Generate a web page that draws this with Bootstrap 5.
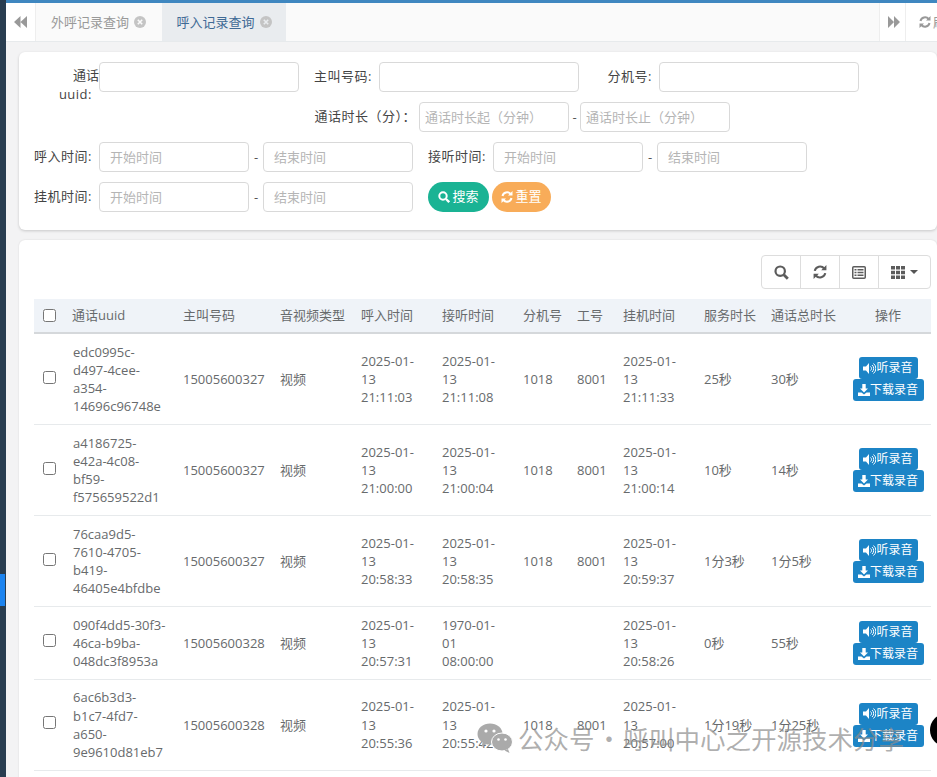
<!DOCTYPE html>
<html lang="zh">
<head>
<meta charset="utf-8">
<title>呼入记录查询</title>
<link rel="stylesheet" href="https://cdn.jsdelivr.net/npm/bootstrap@5.3.0/dist/css/bootstrap.min.css">
<style>
html,body{height:100%;overflow:hidden}
body{font-family:"Open Sans","Noto Sans CJK SC",sans-serif;font-size:13px;color:#676a6c;background:#f3f3f4;line-height:18.2px}
.shell{height:777px;overflow:hidden;position:relative}
.rail{width:6px;background:#293d50;flex:none;position:relative}
.rail-mark{position:absolute;left:0;top:574px;width:5px;height:32px;background:#1c84f0}
.main-area{flex:1;min-width:0;overflow:hidden}
.topline{height:3px;background:#3f87c0}
.tabbar{height:39px;background:#fafafa;border-bottom:1px solid #e7eaec}
.tab-arrow{width:30px;background:#fff;border-right:1px solid #eee}
.tab-item{width:125px;height:38px;color:#999;gap:5px}
.tab-item.on{background:#e9ecef;color:#3f6a95;width:124px;margin-left:1px}
.tab-gap{flex:1}
.arrow-r{width:27px;background:#fff;border-left:1px solid #eee;border-right:1px solid #eee}
.arrow-r svg{margin-left:3px}
.refresh-r{width:31px;padding-left:13px;color:#999;white-space:nowrap;background:#fff;gap:2px;overflow:hidden}
.refresh-r svg{flex:none}
.panel{background:#fff;border-radius:6px;box-shadow:0 1px 3px rgba(0,0,0,.18);margin-left:13px;padding:10px 15px}
.panel-form{height:178px;margin-top:10px;gap:10px}
.panel-table{margin-top:10px;height:600px;padding-top:15px;padding-right:6px;box-shadow:0 0 2px rgba(0,0,0,.12)}
.frow{height:30px;gap:0}
.lab{color:#444;text-align:right;padding-right:7px;padding-bottom:2px;line-height:19px;flex:none;white-space:nowrap;letter-spacing:.5px}
.lab-a{width:65px}
.lab-b{width:80px}
.lab-c{width:385px;padding-right:3px}
.lab-uu{align-self:flex-start;padding-top:4px}
.uu-top{margin-right:-7px;letter-spacing:0}
.fld{height:30px;border:1px solid #d9d9d9;border-radius:4px;padding:0 10px;font-size:13px;color:#555;background:#fff;flex:none;outline:0}
.fld::placeholder{color:#b5b5b5;opacity:1}
.fld-w{width:200px}
.fld-n{width:150px}
.fld-d{padding:0 5px}
.dash{width:14px;text-align:center;flex:none;color:#555}
.dash-s{width:11px}
.pill{height:30px;border-radius:15px;color:#fff;border:0;font-size:13px;padding:0;display:inline-flex;align-items:center;justify-content:center;gap:2px}
.pill:hover,.pill:active{color:#fff}
.pill-go{width:61px;background:#1ab394;margin-left:15px}
.pill-re{width:59px;background:#f8ac59;margin-left:3px}
.tool-wrap{height:34px;margin-bottom:10px}
.tool-btn{flex:none;width:40px;height:34px;padding:0;background:#fff;border:1px solid #ddd;border-radius:0;color:#5c5c5c;margin-left:-1px;display:flex;align-items:center;justify-content:center;gap:5px}
.tool-btn:first-child{border-radius:4px 0 0 4px}
.tool-btn:last-child{width:53px;border-radius:0 4px 4px 0}
.caret-d{width:0;height:0;border-left:4px solid transparent;border-right:4px solid transparent;border-top:4px solid #555}
.grid-tb{table-layout:fixed;width:897px;margin:0;color:#676a6c;font-size:13px;line-height:18.2px;border-collapse:collapse}
.grid-tb th{background:#eff3f8;font-weight:400;height:34px;padding:0 10px;border-bottom:2px solid #d5d8db;vertical-align:middle;white-space:nowrap;color:#676a6c}
.grid-tb td{padding:8.6px 5px 8.6px 10px;border-bottom:1px solid #e7eaec;vertical-align:middle;white-space:nowrap}
.grid-tb td.idc{padding-left:11px}
.grid-tb th.cb{padding:0 0 0 9px}
.grid-tb td.cb{padding:0 0 4px 9px}
.c0{width:28px}.c1{width:111px}.c2{width:97px}.c3{width:81px}.c4{width:81px}.c5{width:81px}.c6{width:54px}.c7{width:46px}.c8{width:81px}.c9{width:67px}.c10{width:84px}.c11{width:86px}
.chk{width:13px;height:13px;margin:0;display:block}
.grid-tb td.act{padding:0;text-align:center}
.btn-rec{display:flex;align-items:center;justify-content:center;gap:0;height:22px;background:#1c84c6;color:#fff;border-radius:3px;font-size:12px;line-height:1;padding:0;margin:0 auto;border:0}
.btn-rec:hover,.btn-rec:active{background:#1c84c6;color:#fff}
.btn-rec svg{flex:none}
.rec-l{width:59px}
.rec-d{width:71px}
.wm{position:absolute;left:477px;top:723px;display:flex;align-items:center;gap:5px;font-size:25.5px;line-height:30px;color:rgba(140,140,140,.7);white-space:nowrap;font-family:"Noto Sans CJK SC",sans-serif;word-spacing:-4px}
.blob{position:absolute;left:930px;top:714px;width:30px;height:32px;background:#000;border-radius:50%}
</style>
</head>
<body>
<div class="shell d-flex">
  <div class="rail"><div class="rail-mark"></div></div>
  <div class="main-area">
    <div class="topline"></div>
    <div class="tabbar d-flex">
      <div class="tab-arrow d-flex align-items-center justify-content-center">
        <svg width="13" height="12" viewBox="0 0 13 12" fill="#999"><path d="M6.500 0v12L0 6zM13 0v12L6.500 6z"/></svg>
      </div>
      <div class="tab-item d-flex align-items-center justify-content-center">外呼记录查询
        <svg width="12" height="12" viewBox="0 0 12 12"><circle cx="6" cy="6" r="6" fill="#c4c4c4"/><path d="M3.800 3.800l4.400 4.400M8.200 3.800L3.800 8.200" stroke="#fafafa" stroke-width="1.600"/></svg>
      </div>
      <div class="tab-item on d-flex align-items-center justify-content-center">呼入记录查询
        <svg width="12" height="12" viewBox="0 0 12 12"><circle cx="6" cy="6" r="6" fill="#c4c4c4"/><path d="M3.800 3.800l4.400 4.400M8.200 3.800L3.800 8.200" stroke="#e9ecef" stroke-width="1.600"/></svg>
      </div>
      <div class="tab-gap"></div>
      <div class="arrow-r d-flex align-items-center justify-content-center">
        <svg width="12" height="12" viewBox="0 0 12 12" fill="#999"><path d="M0 0l6 6-6 6zM6 0l6 6-6 6z"/></svg>
      </div>
      <div class="refresh-r d-flex align-items-center">
        <svg width="12" height="12" viewBox="0 0 12 12" fill="none" stroke="#999" stroke-width="2"><path d="M1.500 5A4.600 4.600 0 0 1 9.600 3M10.500 7A4.600 4.600 0 0 1 2.400 9"/><path d="M11.500 0v4.500H7zM.5 12V7.500H5z" fill="#999" stroke="none"/></svg><span>刷新</span>
      </div>
    </div>

    <form class="panel panel-form d-flex flex-column">
      <div class="frow d-flex">
        <label class="lab lab-a lab-uu"><span class="uu-top">通话</span><br>uuid:</label>
        <input class="fld fld-w" type="text" aria-label="通话uuid">
        <label class="lab lab-b align-self-center">主叫号码:</label>
        <input class="fld fld-w" type="text" aria-label="主叫号码">
        <label class="lab lab-b align-self-center">分机号:</label>
        <input class="fld fld-w" type="text" aria-label="分机号">
      </div>
      <div class="frow d-flex">
        <label class="lab lab-c align-self-center">通话时长（分）：</label>
        <input class="fld fld-n fld-d" type="text" placeholder="通话时长起（分钟）">
        <span class="dash dash-s align-self-center">-</span>
        <input class="fld fld-n fld-d" type="text" placeholder="通话时长止（分钟）">
      </div>
      <div class="frow d-flex">
        <label class="lab lab-a align-self-center">呼入时间:</label>
        <input class="fld fld-n" type="text" placeholder="开始时间">
        <span class="dash align-self-center">-</span>
        <input class="fld fld-n" type="text" placeholder="结束时间">
        <label class="lab lab-b align-self-center">接听时间:</label>
        <input class="fld fld-n" type="text" placeholder="开始时间">
        <span class="dash align-self-center">-</span>
        <input class="fld fld-n" type="text" placeholder="结束时间">
      </div>
      <div class="frow d-flex">
        <label class="lab lab-a align-self-center">挂机时间:</label>
        <input class="fld fld-n" type="text" placeholder="开始时间">
        <span class="dash align-self-center">-</span>
        <input class="fld fld-n" type="text" placeholder="结束时间">
        <button type="button" class="btn pill pill-go">
          <svg width="12" height="12" viewBox="0 0 12 12" fill="none" stroke="#fff"><circle cx="5" cy="5" r="3.700" stroke-width="2"/><path d="M8 8l3.200 3.200" stroke-width="2.300"/></svg>搜索
        </button>
        <button type="button" class="btn pill pill-re">
          <svg width="12" height="12" viewBox="0 0 12 12" fill="none" stroke="#fff" stroke-width="2"><path d="M1.500 5A4.600 4.600 0 0 1 9.600 3M10.500 7A4.600 4.600 0 0 1 2.400 9"/><path d="M11.500 0v4.500H7zM.5 12V7.500H5z" fill="#fff" stroke="none"/></svg>重置
        </button>
      </div>
    </form>

    <div class="panel panel-table">
      <div class="tool-wrap d-flex justify-content-end">
        <button class="btn tool-btn" aria-label="搜索"><svg width="15" height="15" viewBox="0 0 15 15" fill="none" stroke="#5c5c5c"><circle cx="6.200" cy="6.200" r="4.700" stroke-width="2.200"/><path d="M9.800 9.800l4 4" stroke-width="2.800"/></svg></button>
        <button class="btn tool-btn" aria-label="刷新"><svg width="14" height="14" viewBox="0 0 12 12" fill="none" stroke="#5c5c5c" stroke-width="1.800"><path d="M1.500 5A4.600 4.600 0 0 1 9.600 3M10.500 7A4.600 4.600 0 0 1 2.400 9"/><path d="M11.500 0v4.500H7zM.5 12V7.500H5z" fill="#5c5c5c" stroke="none"/></svg></button>
        <button class="btn tool-btn" aria-label="列表"><svg width="14" height="13" viewBox="0 0 14 13" fill="none" stroke="#5c5c5c"><rect x=".75" y=".75" width="12.500" height="11.500" rx="1" stroke-width="1.500"/><path d="M2.500 3.700h2M2.500 6.500h2M2.500 9.300h2M5.500 3.700h6M5.500 6.500h6M5.500 9.300h6" stroke-width="1.400"/></svg></button>
        <button class="btn tool-btn" aria-label="列"><svg width="14" height="13" viewBox="0 0 14 13" fill="#5c5c5c"><path d="M0 0h4v3.600H0zM5 0h4v3.600H5zM10 0h4v3.600h-4zM0 4.700h4v3.600H0zM5 4.700h4v3.600H5zM10 4.700h4v3.600h-4zM0 9.400h4V13H0zM5 9.400h4V13H5zM10 9.400h4V13h-4z"/></svg><span class="caret-d"></span></button>
      </div>
      <table class="grid-tb">
        <colgroup><col class="c0"><col class="c1"><col class="c2"><col class="c3"><col class="c4"><col class="c5"><col class="c6"><col class="c7"><col class="c8"><col class="c9"><col class="c10"><col class="c11"></colgroup>
        <thead><tr>
          <th class="cb"><input class="chk" type="checkbox" aria-label="全选"></th>
          <th>通话uuid</th><th>主叫号码</th><th>音视频类型</th><th>呼入时间</th><th>接听时间</th><th>分机号</th><th>工号</th><th>挂机时间</th><th>服务时长</th><th>通话总时长</th><th class="text-center">操作</th>
        </tr></thead>
        <tbody>
          <tr><td class="cb"><input class="chk" type="checkbox" aria-label="选择"></td><td class="idc">edc0995c-<br>d497-4cee-<br>a354-<br>14696c96748e</td><td>15005600327</td><td>视频</td><td>2025-01-<br>13<br>21:11:03</td><td>2025-01-<br>13<br>21:11:08</td><td>1018</td><td>8001</td><td>2025-01-<br>13<br>21:11:33</td><td>25秒</td><td>30秒</td><td class="act"><a class="btn btn-rec rec-l"><svg width="13" height="11" viewBox="0 0 13 11" fill="#fff"><path d="M6 0v11L3 7.500H0v-4h3z"/><path d="M7.500 3.500a2.500 2.500 0 0 1 0 4M9 2a4.500 4.500 0 0 1 0 7M10.500.5a6.500 6.500 0 0 1 0 10" fill="none" stroke="#fff"/></svg>听录音</a><a class="btn btn-rec rec-d"><svg width="12" height="12" viewBox="0 0 12 12" fill="#fff"><path d="M4.300 0h3.400v4.500H10L6 8.500 2 4.500h2.300zM0 8.500h3.500L6 10.500l2.500-2H12V12H0z"/></svg>下载录音</a></td></tr>
          <tr><td class="cb"><input class="chk" type="checkbox" aria-label="选择"></td><td class="idc">a4186725-<br>e42a-4c08-<br>bf59-<br>f575659522d1</td><td>15005600327</td><td>视频</td><td>2025-01-<br>13<br>21:00:00</td><td>2025-01-<br>13<br>21:00:04</td><td>1018</td><td>8001</td><td>2025-01-<br>13<br>21:00:14</td><td>10秒</td><td>14秒</td><td class="act"><a class="btn btn-rec rec-l"><svg width="13" height="11" viewBox="0 0 13 11" fill="#fff"><path d="M6 0v11L3 7.500H0v-4h3z"/><path d="M7.500 3.500a2.500 2.500 0 0 1 0 4M9 2a4.500 4.500 0 0 1 0 7M10.500.5a6.500 6.500 0 0 1 0 10" fill="none" stroke="#fff"/></svg>听录音</a><a class="btn btn-rec rec-d"><svg width="12" height="12" viewBox="0 0 12 12" fill="#fff"><path d="M4.300 0h3.400v4.500H10L6 8.500 2 4.500h2.300zM0 8.500h3.500L6 10.500l2.500-2H12V12H0z"/></svg>下载录音</a></td></tr>
          <tr><td class="cb"><input class="chk" type="checkbox" aria-label="选择"></td><td class="idc">76caa9d5-<br>7610-4705-<br>b419-<br>46405e4bfdbe</td><td>15005600327</td><td>视频</td><td>2025-01-<br>13<br>20:58:33</td><td>2025-01-<br>13<br>20:58:35</td><td>1018</td><td>8001</td><td>2025-01-<br>13<br>20:59:37</td><td>1分3秒</td><td>1分5秒</td><td class="act"><a class="btn btn-rec rec-l"><svg width="13" height="11" viewBox="0 0 13 11" fill="#fff"><path d="M6 0v11L3 7.500H0v-4h3z"/><path d="M7.500 3.500a2.500 2.500 0 0 1 0 4M9 2a4.500 4.500 0 0 1 0 7M10.500.5a6.500 6.500 0 0 1 0 10" fill="none" stroke="#fff"/></svg>听录音</a><a class="btn btn-rec rec-d"><svg width="12" height="12" viewBox="0 0 12 12" fill="#fff"><path d="M4.300 0h3.400v4.500H10L6 8.500 2 4.500h2.300zM0 8.500h3.500L6 10.500l2.500-2H12V12H0z"/></svg>下载录音</a></td></tr>
          <tr><td class="cb"><input class="chk" type="checkbox" aria-label="选择"></td><td class="idc">090f4dd5-30f3-<br>46ca-b9ba-<br>048dc3f8953a</td><td>15005600328</td><td>视频</td><td>2025-01-<br>13<br>20:57:31</td><td>1970-01-<br>01<br>08:00:00</td><td></td><td></td><td>2025-01-<br>13<br>20:58:26</td><td>0秒</td><td>55秒</td><td class="act"><a class="btn btn-rec rec-l"><svg width="13" height="11" viewBox="0 0 13 11" fill="#fff"><path d="M6 0v11L3 7.500H0v-4h3z"/><path d="M7.500 3.500a2.500 2.500 0 0 1 0 4M9 2a4.500 4.500 0 0 1 0 7M10.500.5a6.500 6.500 0 0 1 0 10" fill="none" stroke="#fff"/></svg>听录音</a><a class="btn btn-rec rec-d"><svg width="12" height="12" viewBox="0 0 12 12" fill="#fff"><path d="M4.300 0h3.400v4.500H10L6 8.500 2 4.500h2.300zM0 8.500h3.500L6 10.500l2.500-2H12V12H0z"/></svg>下载录音</a></td></tr>
          <tr><td class="cb"><input class="chk" type="checkbox" aria-label="选择"></td><td class="idc">6ac6b3d3-<br>b1c7-4fd7-<br>a650-<br>9e9610d81eb7</td><td>15005600328</td><td>视频</td><td>2025-01-<br>13<br>20:55:36</td><td>2025-01-<br>13<br>20:55:42</td><td>1018</td><td>8001</td><td>2025-01-<br>13<br>20:57:00</td><td>1分19秒</td><td>1分25秒</td><td class="act"><a class="btn btn-rec rec-l"><svg width="13" height="11" viewBox="0 0 13 11" fill="#fff"><path d="M6 0v11L3 7.500H0v-4h3z"/><path d="M7.500 3.500a2.500 2.500 0 0 1 0 4M9 2a4.500 4.500 0 0 1 0 7M10.500.5a6.500 6.500 0 0 1 0 10" fill="none" stroke="#fff"/></svg>听录音</a><a class="btn btn-rec rec-d"><svg width="12" height="12" viewBox="0 0 12 12" fill="#fff"><path d="M4.300 0h3.400v4.500H10L6 8.500 2 4.500h2.300zM0 8.500h3.500L6 10.500l2.500-2H12V12H0z"/></svg>下载录音</a></td></tr>
        </tbody>
      </table>
    </div>
  </div>
  <div class="wm">
    <svg width="36" height="30" viewBox="0 0 36 30" fill="#aaa"><ellipse cx="13" cy="11" rx="12.500" ry="10.500"/><path d="M6 18l-1.500 6 6-3.500z"/><ellipse cx="25" cy="19" rx="10.500" ry="9" stroke="#fff" stroke-width="1"/><path d="M31 26l1.500 4-5-2.500z"/><circle cx="9" cy="8" r="1.600" fill="#fff"/><circle cx="17" cy="8" r="1.600" fill="#fff"/><circle cx="21.500" cy="16.500" r="1.300" fill="#fff"/><circle cx="28.500" cy="16.500" r="1.300" fill="#fff"/></svg>
    <span>公众号 · 呼叫中心之开源技术分享</span>
  </div>
  <div class="blob"></div>
</div>
<script src="https://cdn.jsdelivr.net/npm/bootstrap@5.3.0/dist/js/bootstrap.bundle.min.js"></script>
</body>
</html>
